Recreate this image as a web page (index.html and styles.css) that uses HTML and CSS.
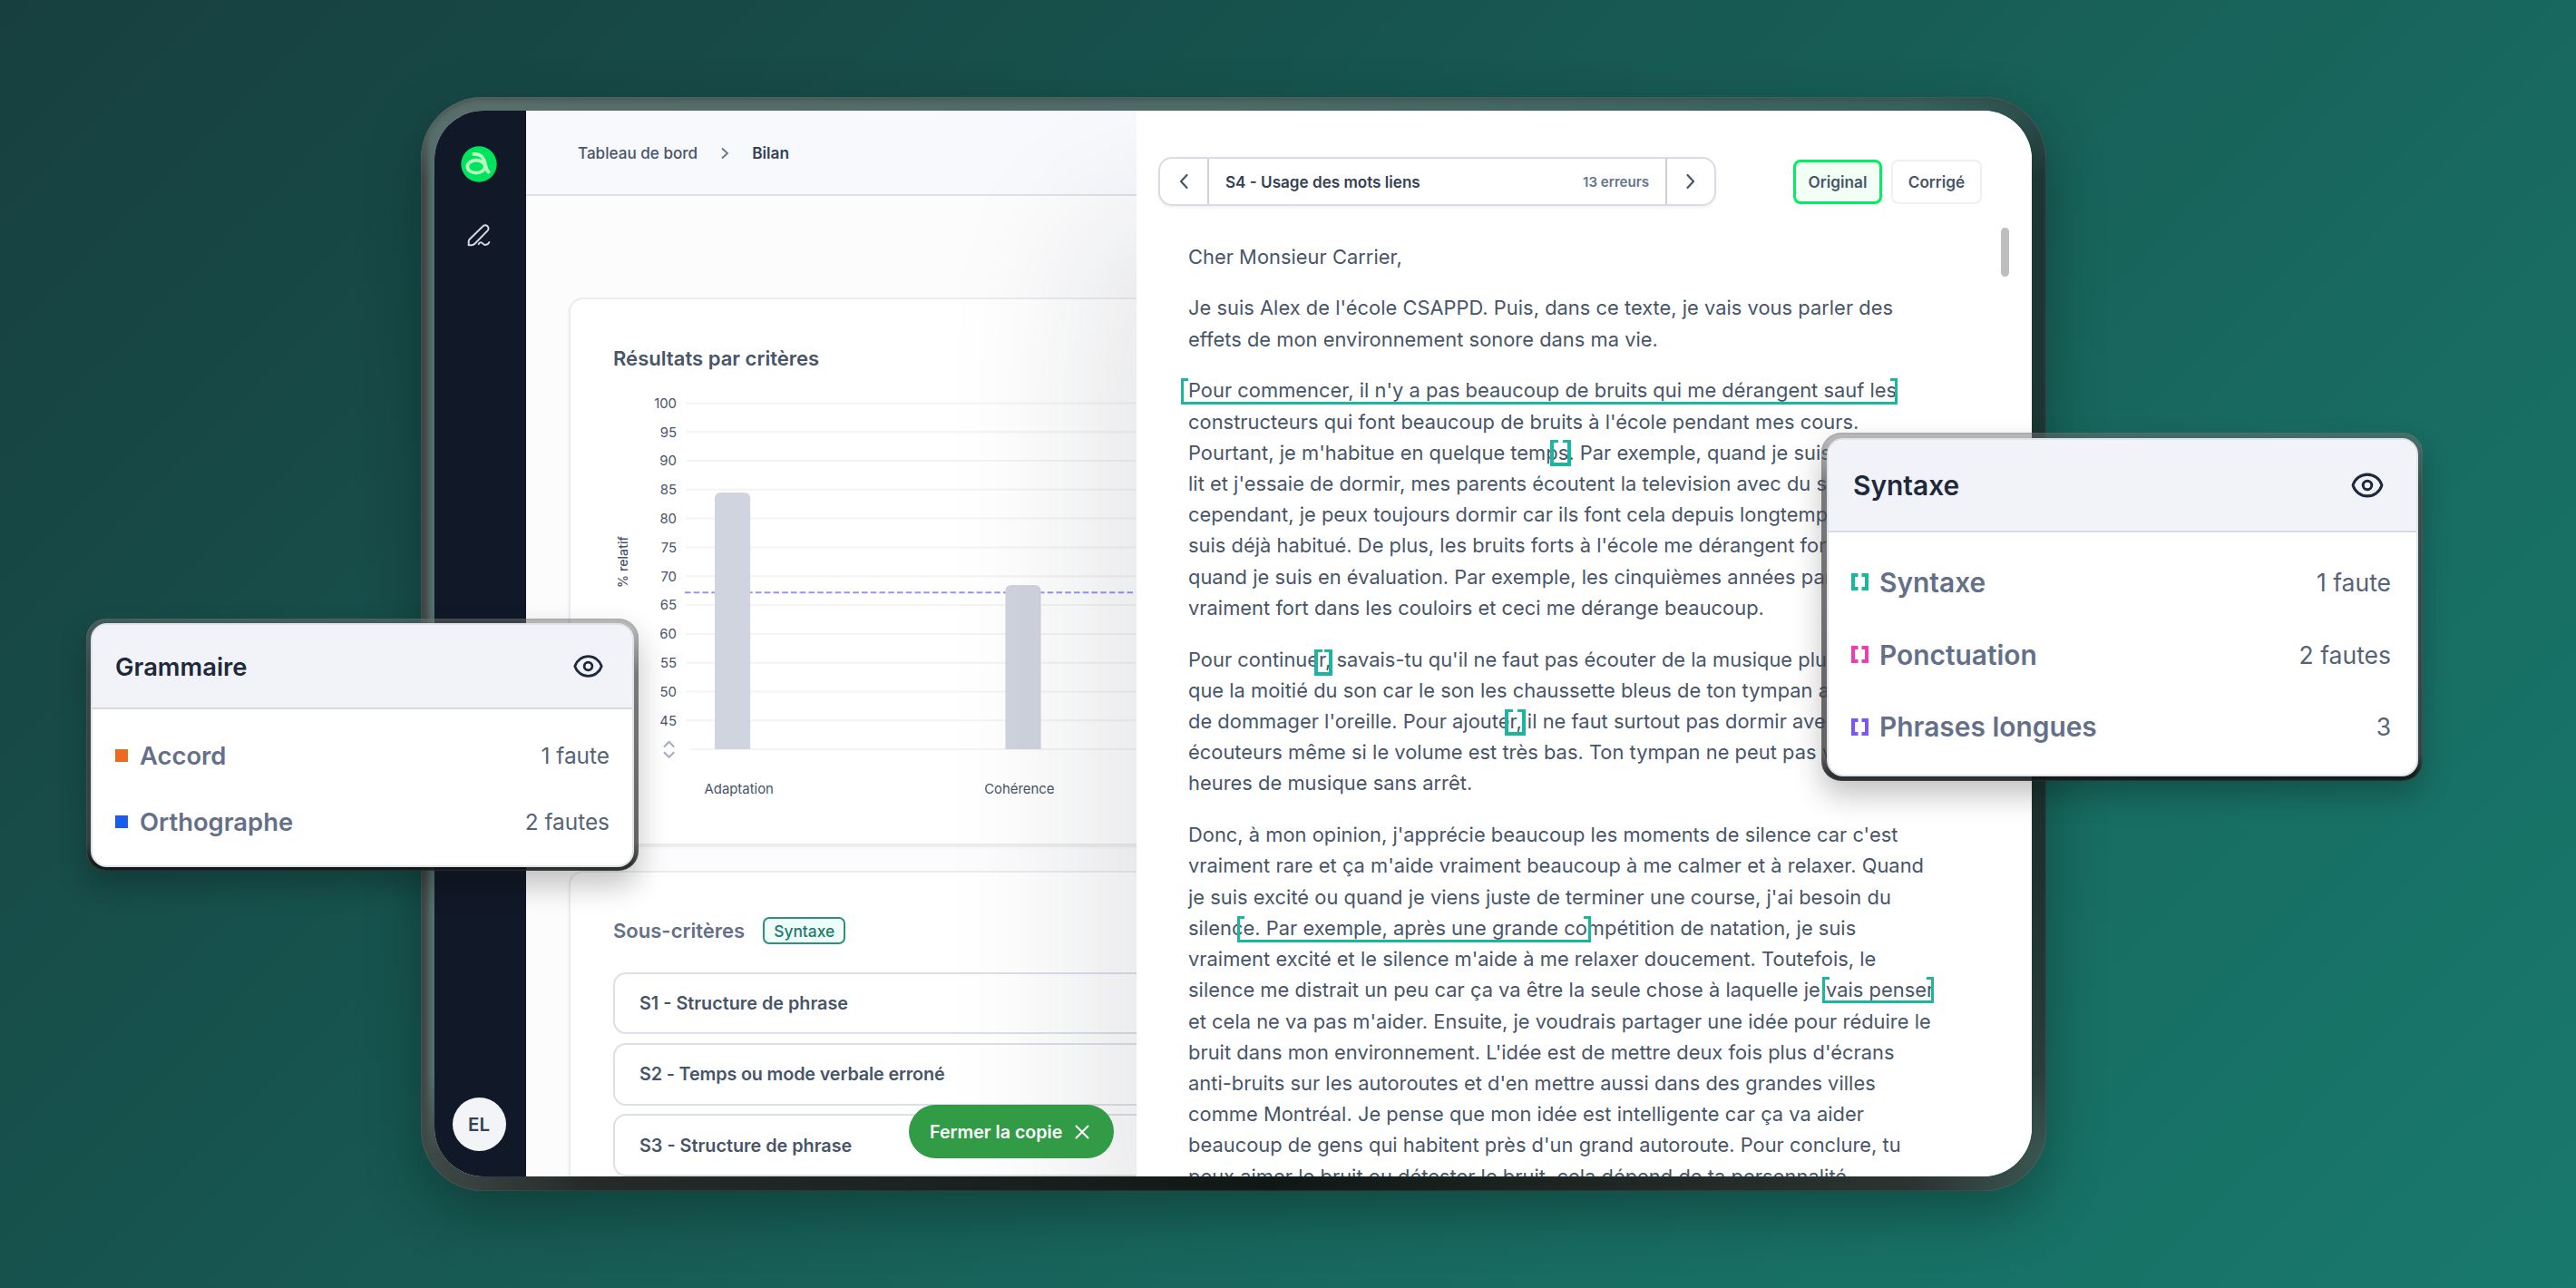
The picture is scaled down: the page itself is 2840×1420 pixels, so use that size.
FILE: index.html
```html
<!DOCTYPE html>
<html lang="fr">
<head>
<meta charset="utf-8">
<title>Bilan</title>
<link rel="stylesheet" href="styles.css">
</head>
<body>
<div class="stage">
  <div class="tablet">
    <div class="screen">
      <nav class="sidebar">
        <svg class="logo" viewBox="55 35 120 120"><circle cx="115" cy="95" r="59" fill="#00e35f"/><g fill="none" stroke="#b8ffc0" stroke-width="11"><ellipse cx="106" cy="103" rx="29" ry="21"/><path d="M93 62C120 58 133 74 136 96C138 110 143 118 150 125" /></g></svg>
        <svg class="pen" viewBox="76 290 78 74" fill="none" stroke="#d5d8df" stroke-width="6" stroke-linecap="round" stroke-linejoin="round"><path d="M81 359V348Q81 343 85 339L128 297A10 10 0 0 1 144 311L102 354Q97 359 91 359Z"/><path d="M114 356C118 348 124 349 128 354C133 361 144 359 149 350"/></svg>
        <div class="avatar">EL</div>
      </nav>
      <main class="main">
        <header class="crumbs">
          <span>Tableau de bord</span>
          <svg viewBox="0 0 10 14"><path d="M2 1.5L8 7L2 12.500"/></svg>
          <b>Bilan</b>
        </header>
        <section class="card results">
          <h2>Résultats par critères</h2>
          <svg class="chart" viewBox="677 430 576 460">
            <g class="grid">
              <path d="M757 444.400H1260M757 476.200H1260M757 508H1260M757 539.800H1260M757 571.600H1260M757 603.500H1260M757 635.300H1260M757 667.100H1260M757 698.900H1260M757 730.700H1260M757 762.500H1260M757 794.300H1260M761 826H1260"/>
            </g>
            <path class="average" d="M756 653.200H1260"/>
            <path class="bar" d="M789 826V550Q789 543 796 543H821Q828.200 543 828.200 550V826Z"/>
            <path class="bar" d="M1109.400 826V652Q1109.400 645 1116.400 645H1141.500Q1148.600 645 1148.600 652V826Z"/>
            <g class="ticks">
              <text x="747" y="449.700">100</text><text x="747" y="481.500">95</text><text x="747" y="513.300">90</text><text x="747" y="545.100">85</text><text x="747" y="576.900">80</text><text x="747" y="608.800">75</text><text x="747" y="640.600">70</text><text x="747" y="672.400">65</text><text x="747" y="704.200">60</text><text x="747" y="736">55</text><text x="747" y="767.800">50</text><text x="747" y="799.600">45</text>
            </g>
            <path class="sorter" d="M733 823.500L738.600 818L744.200 823.500M733 829.300L738.600 834.800L744.200 829.300"/>
            <g class="names"><text x="815.700" y="875">Adaptation</text><text x="1124.800" y="875">Cohérence</text></g>
            <text class="unit" transform="translate(692.500 619.500) rotate(-90)">% relatif</text>
          </svg>
        </section>
        <section class="card subs">
          <div class="subs-head"><h2>Sous-critères</h2><span class="badge">Syntaxe</span></div>
          <div class="row">S1 - Structure de phrase</div>
          <div class="row tight">S2 - Temps ou mode verbale erroné</div>
          <div class="row">S3 - Structure de phrase</div>
        </section>
      </main>
      <aside class="panel">
        <div class="toolbar">
          <div class="picker">
            <span class="arrow"><svg viewBox="0 0 12 18"><path d="M9.500 2L3 9L9.500 16"/></svg></span>
            <div class="current"><b>S4 - Usage des mots liens</b><small>13 erreurs</small></div>
            <span class="arrow"><svg viewBox="0 0 12 18"><path d="M2.500 2L9 9L2.500 16"/></svg></span>
          </div>
          <div class="tabs"><span class="tab active">Original</span><span class="tab">Corrigé</span></div>
        </div>
        <i class="thumb"></i>
        <article class="text">
          <p>Cher Monsieur Carrier,</p>
          <p>Je suis Alex de l'école CSAPPD. Puis, dans ce texte, je vais vous parler des<br>effets de mon environnement sonore dans ma vie.</p>
          <p>Pour commencer, il n'y a pas beaucoup de bruits qui me dérangent sauf les<br>constructeurs qui font beaucoup de bruits à l'école pendant mes cours.<br>Pourtant, je m'habitue en quelque temps. Par exemple, quand je suis<br>lit et j'essaie de dormir, mes parents écoutent la television avec du s<br>cependant, je peux toujours dormir car ils font cela depuis longtemps<br>suis déjà habitué. De plus, les bruits forts à l'école me dérangent for<br>quand je suis en évaluation. Par exemple, les cinquièmes années par<br>vraiment fort dans les couloirs et ceci me dérange beaucoup.</p>
          <p>Pour continuer, savais-tu qu'il ne faut pas écouter de la musique plus<br>que la moitié du son car le son les chaussette bleus de ton tympan a<br>de dommager l'oreille. Pour ajouter, il ne faut surtout pas dormir avec<br>écouteurs même si le volume est très bas. Ton tympan ne peut pas v<br>heures de musique sans arrêt.</p>
          <p>Donc, à mon opinion, j'apprécie beaucoup les moments de silence car c'est<br>vraiment rare et ça m'aide vraiment beaucoup à me calmer et à relaxer. Quand<br>je suis excité ou quand je viens juste de terminer une course, j'ai besoin du<br>silence. Par exemple, après une grande compétition de natation, je suis<br>vraiment excité et le silence m'aide à me relaxer doucement. Toutefois, le<br>silence me distrait un peu car ça va être la seule chose à laquelle je vais penser<br>et cela ne va pas m'aider. Ensuite, je voudrais partager une idée pour réduire le<br>bruit dans mon environnement. L'idée est de mettre deux fois plus d'écrans<br>anti-bruits sur les autoroutes et d'en mettre aussi dans des grandes villes<br>comme Montréal. Je pense que mon idée est intelligente car ça va aider<br>beaucoup de gens qui habitent près d'un grand autoroute. Pour conclure, tu<br>peux aimer le bruit ou détester le bruit, cela dépend de ta personnalité.</p>
          <i class="mark m1"></i><i class="mark small m2"></i><i class="mark small m3"></i><i class="mark small m4"></i><i class="mark m5"></i><i class="mark m6"></i>
        </article>
      </aside>
      <div class="close">Fermer la copie<svg viewBox="0 0 16 16"><path d="M1.500 1.500L14.500 14.500M14.500 1.500L1.500 14.500"/></svg></div>
    </div>
  </div>

  <div class="float grammar">
    <div class="float-body">
      <header>Grammaire<svg class="eye" viewBox="0 0 24 24"><path d="M2.036 12.322a1.012 1.012 0 0 1 0-.639C3.423 7.510 7.360 4.500 12 4.500c4.638 0 8.573 3.007 9.963 7.178.07.207.07.431 0 .639C20.577 16.490 16.640 19.500 12 19.500c-4.638 0-8.573-3.007-9.963-7.178Z"/><circle cx="12" cy="12" r="3"/></svg></header>
      <ul>
        <li><i class="square orange"></i><b>Accord</b><span>1 faute</span></li>
        <li><i class="square blue"></i><b>Orthographe</b><span>2 fautes</span></li>
      </ul>
    </div>
  </div>

  <div class="float syntax">
    <div class="float-body">
      <header>Syntaxe<svg class="eye" viewBox="0 0 24 24"><path d="M2.036 12.322a1.012 1.012 0 0 1 0-.639C3.423 7.510 7.360 4.500 12 4.500c4.638 0 8.573 3.007 9.963 7.178.07.207.07.431 0 .639C20.577 16.490 16.640 19.500 12 19.500c-4.638 0-8.573-3.007-9.963-7.178Z"/><circle cx="12" cy="12" r="3"/></svg></header>
      <ul>
        <li><svg class="brackets teal" viewBox="0 0 19 19"><path d="M7.500 2H2V17H7.500M11.500 2H17V17H11.500"/></svg><b>Syntaxe</b><span>1 faute</span></li>
        <li><svg class="brackets pink" viewBox="0 0 19 19"><path d="M7.500 2H2V17H7.500M11.500 2H17V17H11.500"/></svg><b>Ponctuation</b><span>2 fautes</span></li>
        <li><svg class="brackets violet" viewBox="0 0 19 19"><path d="M7.500 2H2V17H7.500M11.500 2H17V17H11.500"/></svg><b>Phrases longues</b><span>3</span></li>
      </ul>
    </div>
  </div>
</div>
</body>
</html>
```
FILE: styles.css
```css
* { box-sizing: border-box; }
body { margin: 0; font-family: Inter, "Liberation Sans", sans-serif; color: #475569; }
h2, p, ul { margin: 0; padding: 0; }
ul { list-style: none; }
b, h2 { font-weight: 600; }
svg { display: block; fill: none; flex: none; }

.stage {
  position: relative;
  width: 2840px;
  height: 1420px;
  overflow: hidden;
  padding: 107px 584px 107px 464px;
  background: linear-gradient(135deg, #173f3f 0%, #174f4b 28%, #186a60 70%, #18796c 100%);
}

/* tablet bezel: top and bottom bands, side bands fade in past the corners */
.tablet {
  position: relative;
  height: 1206px;
  padding: 15px 16px 16px 15px;
  border-radius: 68px;
  background:
    linear-gradient(90deg, #596e6a, #4d6a67 50%, #37615d 92%, #2a4d49) top / 100% 50% no-repeat,
    linear-gradient(90deg, #3f4b48, #262b2a 10%, #101816 52%, #2c3432 92%, #3a5752) bottom / 100% 50% no-repeat;
  box-shadow: 0 24px 60px rgba(4, 24, 22, .38);
}
.tablet::before {
  content: "";
  position: absolute;
  inset: 0;
  border-radius: 68px;
  background:
    linear-gradient(90deg, #3b4442, #46504d 6px, #50706b 12px, #50706b 30px) left / 50% 100% no-repeat,
    linear-gradient(180deg, #1c3834, #1b322f 70%, #2f4743) right / 50% 100% no-repeat;
  -webkit-mask-image: linear-gradient(transparent 20px, #000 90px, #000 calc(100% - 130px), transparent calc(100% - 40px));
  mask-image: linear-gradient(transparent 20px, #000 90px, #000 calc(100% - 130px), transparent calc(100% - 40px));
}
.tablet::after {
  content: "";
  position: absolute;
  inset: 0;
  border-radius: 68px;
  box-shadow: inset 0 0 2px rgba(110, 125, 120, .8), inset 0 4px 5px rgba(60, 66, 62, .45);
}
.screen {
  position: relative;
  z-index: 1;
  height: 1175px;
  overflow: hidden;
  border-radius: 54px;
  background: #fcfcfd;
  display: grid;
  grid-template-columns: 101px 673px 1fr;
}

/* sidebar */
.sidebar { background: #111827; display: flex; flex-direction: column; align-items: center; padding: 39px 3px 28px 0; }
.logo { width: 40px; height: 40px; }
.pen { width: 26px; height: 25px; margin-top: 46px; }
.avatar {
  width: 59px; height: 59px; margin-top: auto; border-radius: 50%;
  background: #f2f4f8; color: #334155; font-size: 20.500px; font-weight: 600;
  display: flex; align-items: center; justify-content: center;
}

/* dashboard */
.main { min-width: 0; height: 1175px; overflow: hidden; }
.crumbs {
  height: 94px; padding: 1px 0 0 57px; display: flex; align-items: center;
  border-bottom: 2px solid #dfe2e8; background: #f8f9fd;
  font-size: 17.100px; font-weight: 500; color: #475569;
}
.crumbs svg { width: 10px; height: 14px; margin: 0 25px 0 25px; stroke: #64748b; stroke-width: 1.800; }
.crumbs b { font-size: 17.300px; color: #334155; }
.card {
  width: 760px; margin-left: 47px; padding-left: 47px;
  border: 2px solid #eaecf0; border-radius: 16px; background: #fff;
  box-shadow: 0 2px 3px rgba(15, 23, 42, .07);
}
.card h2 { font-size: 22.050px; line-height: 28px; color: #475569; }
.results { height: 604px; margin-top: 112px; padding-top: 51px; }
.chart { width: 576px; height: 460px; margin-top: 21px; }
.grid { stroke: #f3f4f7; stroke-width: 2; }
.average { stroke: #8f98f2; stroke-width: 2; stroke-dasharray: 6.500 3.250; }
.bar { fill: #cfd4de; }
.sorter { stroke: #a3adbd; stroke-width: 2; }
.chart text { font-size: 14.900px; fill: #475569; }
.ticks text { text-anchor: end; }
.names text, .chart .unit { text-anchor: middle; }
.chart .unit { font-size: 14.200px; font-weight: 500; }
.subs { height: 400px; margin-top: 28px; padding-top: 49px; }
.subs-head { display: flex; align-items: center; height: 30px; margin-bottom: 31px; }
.subs-head h2 { color: #64708a; }
.badge {
  margin-left: 20px; width: 91px; height: 30px; border: 2px solid #2f8f80; border-radius: 7px;
  background: #effdf9; color: #1d7a6c; font-size: 17.400px; font-weight: 500;
  display: flex; align-items: center; justify-content: center;
}
.row {
  height: 68.400px; margin-bottom: 9.800px; padding-left: 27px; border: 2px solid #dde0e7; border-radius: 14px;
  display: flex; align-items: center; font-size: 19.800px; font-weight: 600; color: #475569;
}
.tight { letter-spacing: -.15px; }

/* correction panel */
.panel {
  position: relative; height: 1175px; background: #fff;
  box-shadow: -50px 120px 160px rgba(15, 23, 42, .11);
}
.toolbar { display: flex; padding: 51px 0 0 24px; align-items: center; }
.picker {
  width: 615px; height: 54px; display: flex; border: 2px solid #d9dce3; border-radius: 15px;
  box-shadow: 0 2px 3px rgba(15, 23, 42, .06);
}
.arrow { width: 52px; display: flex; align-items: center; justify-content: center; }
.arrow svg { width: 12px; height: 18px; stroke: #475569; stroke-width: 2.200; stroke-linecap: round; stroke-linejoin: round; }
.current {
  flex: 1; padding: 0 18px; display: flex; align-items: center; justify-content: space-between;
  border: solid #cdd2da; border-width: 0 2px; font-size: 17.100px; color: #334155;
}
.current small { font-size: 15.100px; font-weight: 600; color: #64748b; }
.tabs { display: flex; gap: 10px; margin-left: 85px; }
.tab {
  height: 49px; width: 100px; border: 2px solid #eef0f3; border-radius: 8px;
  display: flex; align-items: center; justify-content: center; font-size: 17.200px; font-weight: 600; color: #475569;
}
.tab.active { width: 98px; border: 3px solid #00ee62; background: #f3fff5; }
.thumb { position: absolute; left: 953px; top: 129px; width: 9px; height: 54px; border-radius: 5px; background: #bebebe; }
.text { position: relative; padding: 38.800px 0 0 57px; font-size: 21.850px; letter-spacing: .03px; line-height: 34.240px; color: #475569; white-space: nowrap; }
.text p { margin-bottom: 22.400px; }

/* error brackets laid over the copy; offsets from the article corner */
.mark {
  position: absolute; height: 29px; border: solid #1bb5a0; border-width: 0 3px 3px;
  background: linear-gradient(#1bb5a0, #1bb5a0) left top / 5px 3px no-repeat, linear-gradient(#1bb5a0, #1bb5a0) right top / 5px 3px no-repeat;
}
.mark.small { border-width: 0 4px 4px; }
.m1 { left: 49px; top: 190px; width: 790px; }
.m2 { left: 456px; top: 258px; width: 23px; }
.m3 { left: 196px; top: 489px; width: 20px; }
.m4 { left: 406px; top: 555px; width: 23px; }
.m5 { left: 111px; top: 783px; width: 390px; }
.m6 { left: 756px; top: 850px; width: 123px; }

.close {
  position: absolute; left: 523px; top: 1096px; width: 226px; height: 59px; border-radius: 30px;
  background: #319b45; color: #fff; font-size: 19.650px; font-weight: 600;
  display: flex; align-items: center; padding-left: 23px;
}
.close svg { width: 16px; height: 16px; margin-left: 14px; stroke: #fff; stroke-width: 2; stroke-linecap: round; }

/* floating legends */
.float { position: absolute; z-index: 2; border-radius: 22px;
  background:
    linear-gradient(rgba(110, 110, 110, .5), rgba(110, 110, 110, .5) 10px, rgba(70, 70, 70, .72) 60px, rgba(60, 60, 60, .8) calc(100% - 30px), rgba(16, 18, 18, .88) calc(100% - 6px));
  box-shadow: inset 0 0 2px rgba(120, 120, 120, .8), 0 16px 32px rgba(0, 0, 0, .24);
}
.float-body { height: 100%; overflow: hidden; border-radius: 18px; background: #fff; border: 2px solid #dfe3ea; }
.float header { display: flex; justify-content: space-between; align-items: center; background: #f2f3f8; border-bottom: 2px solid #d5dae1; color: #1e293b; font-weight: 600; }
.eye { stroke: #1e293b; stroke-width: 1.900; stroke-linecap: round; stroke-linejoin: round; }
.float li { display: flex; align-items: center; }
.float li b { color: #64708a; }
.float li span { margin-left: auto; color: #566377; }

.grammar { left: 95px; top: 682px; width: 609px; height: 278px; padding: 5px 5px 4px; }
.grammar header { height: 93px; padding: 0 31px 0 25px; font-size: 27.400px; }
.grammar .eye { width: 35px; height: 35px; }
.grammar ul { padding: 14px 25px 0 25px; font-size: 27.400px; }
.grammar li { height: 73px; }
.grammar li b { margin-left: 13px; }
.grammar li span { font-size: 24.400px; }
.square { width: 14px; height: 14px; }
.orange { background: #ee6a20; }
.blue { background: #175df0; }

.syntax { left: 2008px; top: 477px; width: 663px; height: 384px; padding: 6px 5px 5px 6px; }
.syntax header { height: 102px; padding: 0 35px 0 27px; font-size: 29.900px; }
.syntax .eye { width: 38px; height: 38px; }
.syntax ul { padding: 15px 28px 0 25px; font-size: 29.900px; }
.syntax li { height: 79.700px; }
.syntax li b { margin-left: 12px; }
.syntax li span { font-size: 26.500px; }
.brackets { width: 19px; height: 19px; stroke-width: 4; }
.teal { stroke: #17b8a0; }
.pink { stroke: #f03cb4; }
.violet { stroke: #7c55fb; }
```
